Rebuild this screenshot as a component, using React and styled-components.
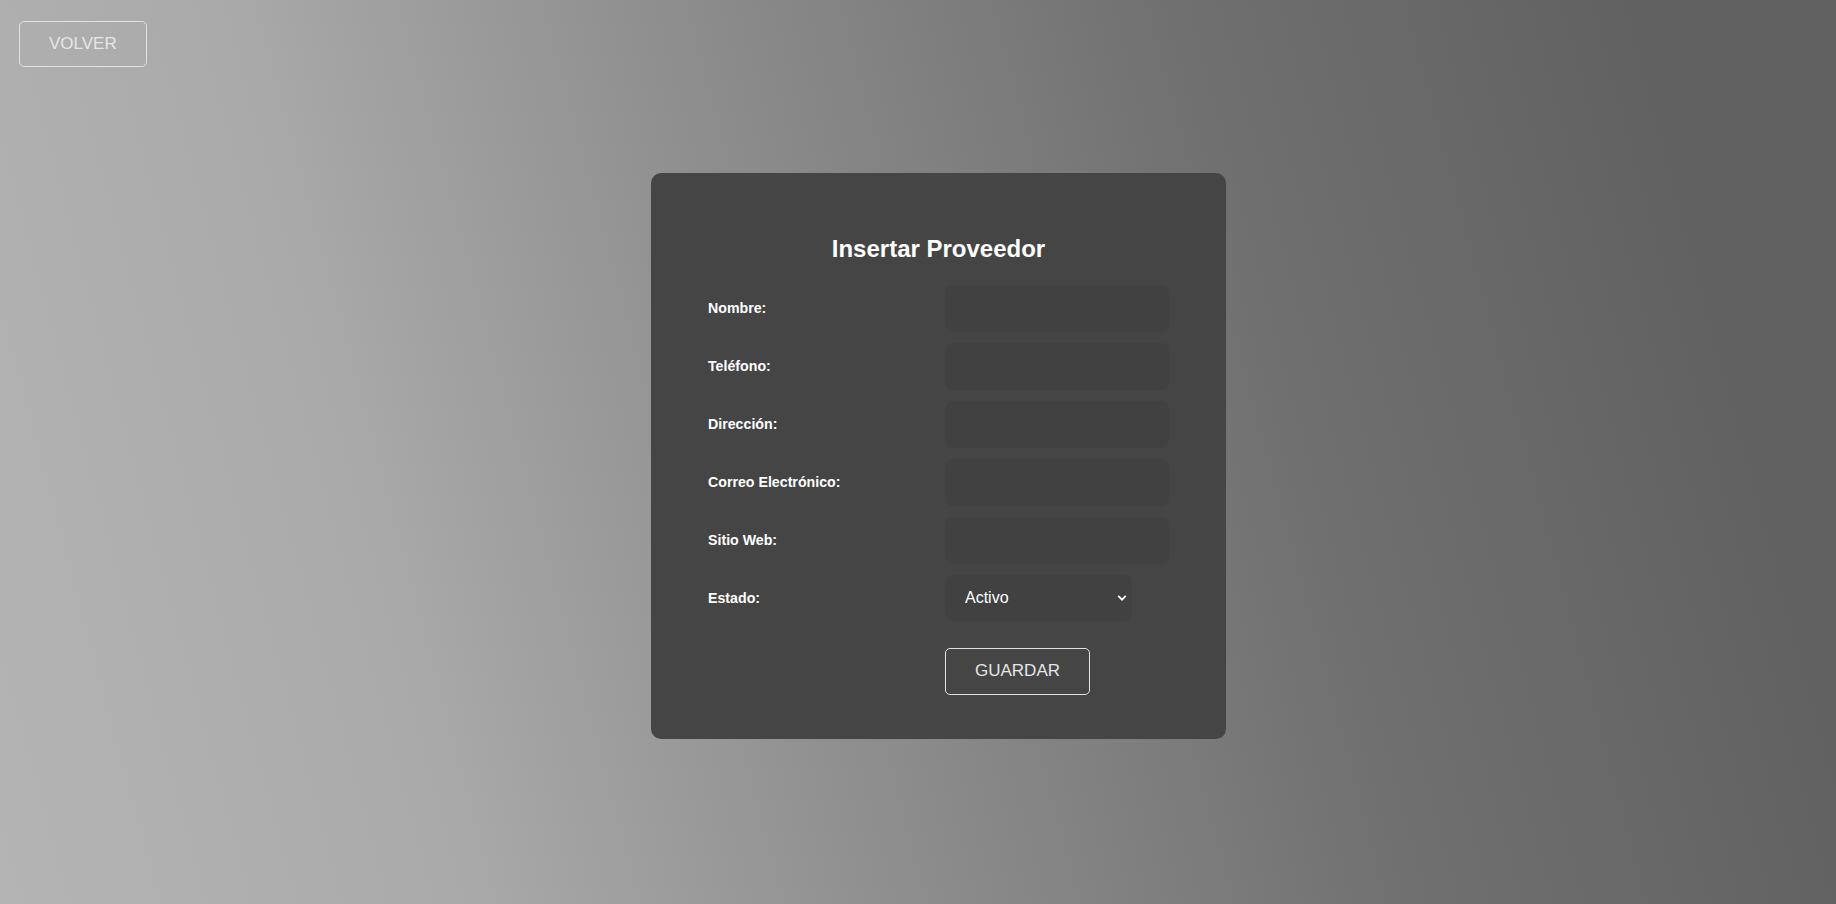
import React from "react";
import styled, { createGlobalStyle } from "styled-components";

const GlobalStyle = createGlobalStyle`
  * {
    box-sizing: border-box;
  }
  body {
    margin: 0;
    font-family: "Liberation Sans", Arial, sans-serif;
  }
`;

const Page = styled.div`
  min-height: 100vh;
  display: flex;
  flex-direction: column;
  background: linear-gradient(
    75deg,
    #b4b4b4 0%,
    #aaaaaa 22%,
    #8c8c8c 45%,
    #707070 68%,
    #606060 92%
  );
`;

const Header = styled.div`
  padding: 21px 0 0 19px;
`;

const Main = styled.div`
  flex: 1;
  display: flex;
  justify-content: center;
  align-items: center;
  padding: 0 0 60px 41px;
`;

const OutlineButton = styled.button`
  height: ${(p) => (p.$tall ? "47px" : "46px")};
  padding: 0 29px;
  background: transparent;
  border: 1px solid #e2e2e2;
  border-radius: 5px;
  color: #e6e6e6;
  font-family: "Liberation Sans", Arial, sans-serif;
  font-size: 17px;
  text-transform: uppercase;
  cursor: pointer;
`;

const Card = styled.div`
  width: 575px;
  padding: 62px 57px 44px;
  background: #454545;
  border-radius: 10px;
`;

const Title = styled.h2`
  margin: 0 0 22px;
  font-size: 24px;
  line-height: 28px;
  font-weight: bold;
  text-align: center;
  color: #ffffff;
`;

const Form = styled.form`
  display: grid;
  grid-template-columns: 237px 224px;
  row-gap: 11px;
  align-items: center;
`;

const Label = styled.label`
  font-size: 14.2px;
  font-weight: bold;
  color: #ffffff;
`;

const Input = styled.input`
  width: 100%;
  height: 47px;
  padding: 0 14px;
  border: none;
  border-radius: 8px;
  background: #414141;
  color: #ffffff;
  font-family: "Liberation Sans", Arial, sans-serif;
  font-size: 16px;
  outline: none;
`;

const SelectWrap = styled.div`
  position: relative;
  width: 187px;
`;

const Select = styled.select`
  appearance: none;
  width: 100%;
  height: 46px;
  padding: 0 20px;
  border: none;
  border-radius: 8px;
  background: #414141;
  color: #ffffff;
  font-family: "Liberation Sans", Arial, sans-serif;
  font-size: 16px;
  outline: none;
`;

const Chevron = styled.svg`
  position: absolute;
  right: 5px;
  top: 50%;
  transform: translateY(-50%);
  pointer-events: none;
`;

const Actions = styled.div`
  grid-column: 2;
  margin-top: 16px;
`;

const fields = [
  { id: "nombre", label: "Nombre:" },
  { id: "telefono", label: "Teléfono:" },
  { id: "direccion", label: "Dirección:" },
  { id: "correo", label: "Correo Electrónico:" },
  { id: "web", label: "Sitio Web:" },
];

export default function App() {
  return (
    <>
      <GlobalStyle />
      <Page>
        <Header>
          <OutlineButton type="button">Volver</OutlineButton>
        </Header>
        <Main>
          <Card>
            <Title>Insertar Proveedor</Title>
            <Form onSubmit={(e) => e.preventDefault()}>
              {fields.map((f) => (
                <React.Fragment key={f.id}>
                  <Label htmlFor={f.id}>{f.label}</Label>
                  <Input id={f.id} type="text" />
                </React.Fragment>
              ))}
              <Label htmlFor="estado">Estado:</Label>
              <SelectWrap>
                <Select id="estado" defaultValue="activo">
                  <option value="activo">Activo</option>
                  <option value="inactivo">Inactivo</option>
                </Select>
                <Chevron width="10" height="7" viewBox="0 0 10 7">
                  <path
                    d="M1.2 1.4 L5 5.2 L8.8 1.4"
                    fill="none"
                    stroke="#ffffff"
                    strokeWidth="1.8"
                  />
                </Chevron>
              </SelectWrap>
              <Actions>
                <OutlineButton type="submit" $tall>
                  Guardar
                </OutlineButton>
              </Actions>
            </Form>
          </Card>
        </Main>
      </Page>
    </>
  );
}
